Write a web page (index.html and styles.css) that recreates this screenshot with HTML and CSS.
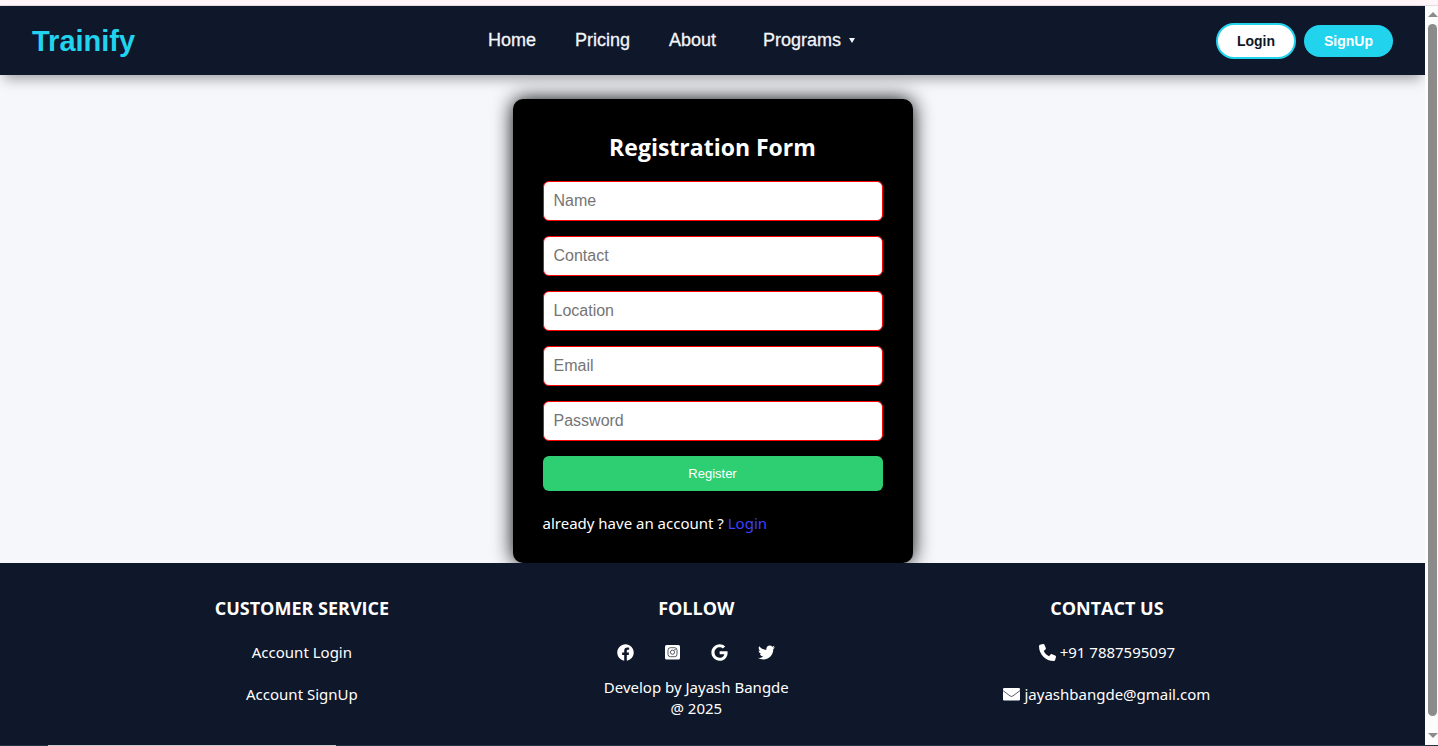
FILE: index.html
```html
<!DOCTYPE html>
<html lang="en">
<head>
<meta charset="utf-8">
<title>Trainify - Registration</title>
<link rel="stylesheet" href="styles.css">
</head>
<body>
<div class="top-strip"></div>
<div class="viewport">
  <div class="page">
    <header class="navbar">
      <a class="logo" href="#">Trainify</a>
      <nav class="nav-links">
        <a href="#">Home</a>
        <a href="#">Pricing</a>
        <a href="#">About</a>
        <button type="button" class="dropdown">Programs <span class="caret"></span></button>
      </nav>
      <div class="actions">
        <button type="button" class="pill pill-login">Login</button>
        <button type="button" class="pill pill-signup">SignUp</button>
      </div>
    </header>
    <main class="content">
      <form class="card">
        <h2>Registration Form</h2>
        <input type="text" placeholder="Name" aria-label="Name">
        <input type="text" placeholder="Contact" aria-label="Contact">
        <input type="text" placeholder="Location" aria-label="Location">
        <input type="email" placeholder="Email" aria-label="Email">
        <input type="password" placeholder="Password" aria-label="Password">
        <button type="button" class="register">Register</button>
        <p>already have an account ? <a href="#">Login</a></p>
      </form>
    </main>
    <footer class="footer">
      <section class="column">
        <h3>CUSTOMER SERVICE</h3>
        <a class="row" href="#">Account Login</a>
        <a class="row" href="#">Account SignUp</a>
      </section>
      <section class="column">
        <h3>FOLLOW</h3>
        <div class="social">
          <a href="#" aria-label="Facebook"><svg viewBox="0 0 512 512"><path d="M504 256C504 119 393 8 256 8S8 119 8 256c0 123.78 90.69 226.38 209.25 245V327.69h-63V256h63v-54.64c0-62.15 37-96.48 93.67-96.48 27.14 0 55.52 4.84 55.52 4.84v61h-31.28c-30.8 0-40.41 19.12-40.41 38.73V256h68.78l-11 71.69h-57.78V501C413.31 482.38 504 379.78 504 256z"/></svg></a>
          <a href="#" aria-label="Instagram"><svg viewBox="0 0 17 17"><rect x="1" y="1" width="15" height="14.500" rx="1.500"/><g class="lines"><rect x="4" y="3.700" width="9" height="9" rx="2.400"/><circle cx="8.500" cy="8.200" r="2.100"/></g><circle class="dot" cx="11" cy="5.700" r=".6"/></svg></a>
          <a href="#" aria-label="Google"><svg viewBox="-12 0 512 512"><path d="M488 261.8C488 403.3 391.1 504 248 504 110.8 504 0 393.2 0 256S110.8 8 248 8c66.8 0 123 24.5 166.3 64.9l-67.5 64.9C258.5 52.6 94.3 116.6 94.3 256c0 86.5 69.1 156.6 153.7 156.6 98.2 0 135-70.4 140.8-106.9H248v-85.3h236.1c2.3 12.7 3.9 24.9 3.9 41.4z"/></svg></a>
          <a href="#" aria-label="Twitter"><svg viewBox="0 0 512 512"><path d="M459.37 151.716c.325 4.548.325 9.097.325 13.645 0 138.72-105.583 298.558-298.558 298.558-59.452 0-114.68-17.219-161.137-47.106 8.447.974 16.568 1.299 25.34 1.299 49.055 0 94.213-16.568 130.274-44.832-46.132-.975-84.792-31.188-98.112-72.772 6.498.974 12.995 1.624 19.818 1.624 9.421 0 18.843-1.3 27.614-3.573-48.081-9.747-84.143-51.98-84.143-102.985v-1.299c13.969 7.797 30.214 12.67 47.431 13.319-28.264-18.843-46.781-51.005-46.781-87.391 0-19.492 5.197-37.36 14.294-52.954 51.655 63.675 129.3 105.258 216.365 109.807-1.624-7.797-2.599-15.918-2.599-24.04 0-57.828 46.782-104.934 104.934-104.934 30.213 0 57.502 12.67 76.67 33.137 23.715-4.548 46.456-13.32 66.599-25.34-7.798 24.366-24.366 44.833-46.132 57.827 21.117-2.273 41.584-8.122 60.426-16.243-14.292 20.791-32.161 39.308-52.628 54.253z"/></svg></a>
        </div>
        <p class="credit">Develop by Jayash Bangde<br>@ 2025</p>
      </section>
      <section class="column">
        <h3>CONTACT US</h3>
        <a class="row" href="#"><svg viewBox="0 0 512 512"><path d="M164.900 24.600c-7.700-18.600-28-28.500-47.400-23.200l-88 24C12.100 30.200 0 46 0 64C0 311.400 200.600 512 448 512c18 0 33.800-12.100 38.600-29.500l24-88c5.300-19.400-4.600-39.700-23.200-47.400l-96-40c-16.300-6.800-35.200-2.100-46.300 11.600L304.700 368C234.300 334.700 177.300 277.700 144 207.300L193.300 167c13.700-11.200 18.400-30 11.600-46.300l-40-96z"/></svg>+91 7887595097</a>
        <a class="row" href="#"><svg viewBox="0 0 17 17"><rect x="0" y="2" width="17" height="12.500" rx="1.200"/><path class="lines" d="M0 4.600L7 9.900Q8.500 11 10 9.900L17 4.600"/></svg>jayashbangde@gmail.com</a>
      </section>
    </footer>
  </div>
  <div class="scrollbar">
    <span class="arrow up"></span>
    <span class="thumb"></span>
    <span class="arrow down"></span>
  </div>
</div>
<div class="bottom-edge"><span class="edge-light"></span></div>
</body>
</html>
```

FILE: styles.css
```css
* { box-sizing: border-box; }
body {
  margin: 0;
  min-height: 100vh;
  display: flex;
  flex-direction: column;
  background: #f5f7fb;
  color: #fff;
  font: 15px/21px "Noto Sans", sans-serif;
}
a { color: inherit; text-decoration: none; }
h2, h3, p { margin: 0; }
h2, h3 { font-family: "Open Sans", sans-serif; }
button { border: 0; cursor: pointer; font-family: "Liberation Sans", Arial, sans-serif; }
svg { display: block; width: 17px; height: 17px; fill: #fff; }
.top-strip { height: 6px; background: #fff5f8; border-bottom: 1px solid #e5dce2; }
.viewport { flex: 1; display: flex; }
.page { flex: 1; display: flex; flex-direction: column; }

.navbar {
  display: flex;
  justify-content: space-between;
  align-items: center;
  height: 69px;
  padding: 0 32px;
  background: #0f172a;
  box-shadow: 0 8px 12px -4px rgba(0, 0, 0, .35);
  font-family: "Liberation Sans", Arial, sans-serif;
}
.logo { color: #22d3ee; font-size: 29px; font-weight: 700; line-height: 36px; }
.nav-links { display: flex; align-items: center; gap: 39px; font-size: 18px; color: #f1f5f9; -webkit-text-stroke: .3px #f1f5f9; }
.dropdown {
  display: flex;
  align-items: center;
  gap: 8px;
  padding: 0 8px;
  background: none;
  color: inherit;
  font-size: 18px;
  line-height: 21px;
}
.caret { border: 3px solid transparent; border-top: 5px solid #f1f5f9; border-bottom: 0; }
.actions { display: flex; align-items: center; gap: 8px; }
.pill { border-radius: 18px; font-size: 14px; font-weight: 700; line-height: 16px; padding: 8px 20px; }
.pill-login { background: #fff; color: #0f172a; border: 2px solid #22d3ee; padding: 8px 19px; }
.pill-signup { background: #22d3ee; color: #fff; }

.content { flex: 1; display: flex; justify-content: center; padding-top: 24px; }
.card {
  display: flex;
  flex-direction: column;
  gap: 15px;
  width: 400px;
  padding: 30px 30px 29px;
  border-radius: 10px;
  background: #000;
  box-shadow: 0 0 20px #000;
}
.card h2 { font-size: 23px; line-height: 37px; text-align: center; }
.card input {
  width: 100%;
  height: 40px;
  padding: 10px;
  border: 1px solid #f00;
  border-radius: 6px;
  background: #fff;
  font: 16px "Liberation Sans", Arial, sans-serif;
}
.card input::placeholder { color: #757575; }
.register { height: 35px; border-radius: 6px; background: #2ecf73; color: #fff; font-size: 13px; }
.card p { padding-top: 7px; }
.card p a { color: #3f3fff; }

.footer {
  position: relative;
  display: flex;
  justify-content: space-evenly;
  padding: 32px 0 19px;
  background: #0f172a;
  text-align: center;
}
.column { display: flex; flex-direction: column; align-items: center; }
.column h3 { font-size: 18px; line-height: 26px; margin-bottom: 21px; }
.row { display: flex; align-items: center; gap: 4px; margin-bottom: 21px; }
.social { display: flex; gap: 30px; padding: 2px 0; margin-bottom: 14px; }
.lines { fill: none; stroke: #0f172a; stroke-width: .7; }
.dot { fill: #0f172a; }

.scrollbar {
  display: flex;
  flex-direction: column;
  align-items: center;
  gap: 7px;
  width: 13px;
  padding: 6px 0 7px 2px;
  background: #fcfcfc;
}
.thumb { flex: 1; width: 9px; border-radius: 5px; background: #8b8b8b; }
.arrow { border: 5px solid transparent; }
.up { border-top: 0; border-bottom: 5px solid #8b8b8b; }
.down { margin-top: 10px; border-bottom: 0; border-top: 5px solid #8b8b8b; }
.bottom-edge { height: 1px; padding-left: 48px; background: #253044; }
.edge-light { display: block; width: 288px; height: 1px; background: #c8c8cc; }
```
